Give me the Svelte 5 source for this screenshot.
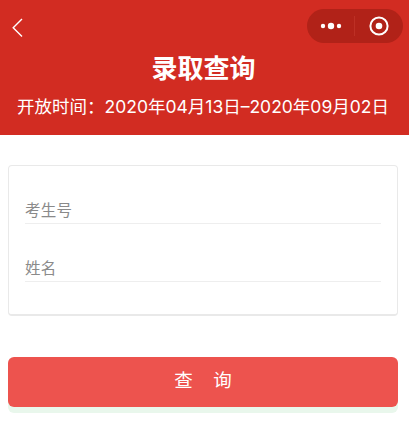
<script>
  const fields = ['考生号', '姓名'];
</script>

<div class="page">
  <header class="hero">
    <div class="topbar">
      <svg class="back" width="14" height="22" viewBox="0 0 14 22" aria-hidden="true">
        <path d="M11 2 L2.2 10.8 L11 19.6" fill="none" stroke="#fff" stroke-width="1.4" />
      </svg>
      <div class="capsule">
        <svg class="dots" width="22" height="8" viewBox="0 0 22 8" aria-hidden="true">
          <circle cx="3" cy="4" r="2.2" fill="#fff" />
          <circle cx="11" cy="4" r="3.2" fill="#fff" />
          <circle cx="19" cy="4" r="2.2" fill="#fff" />
        </svg>
        <span class="divider"></span>
        <svg width="20" height="20" viewBox="0 0 20 20" aria-hidden="true">
          <circle cx="10" cy="10" r="8.6" fill="none" stroke="#fff" stroke-width="2" />
          <circle cx="10" cy="10" r="3.3" fill="#fff" />
        </svg>
      </div>
    </div>
    <h1>录取查询</h1>
    <p>开放时间：2020年04月13日–2020年09月02日</p>
  </header>

  <section class="card">
    {#each fields as f}
      <div class="field">{f}</div>
    {/each}
  </section>

  <div class="action">
    <button type="button">查&nbsp;&nbsp;&nbsp;&nbsp;询</button>
  </div>
</div>

<style>
  :global(body) {
    margin: 0;
    background: #fff;
    overflow: hidden;
  }
  .page {
    width: 409px;
    height: 427px;
    font-family: "Liberation Sans", "Noto Sans CJK SC", sans-serif;
    overflow: hidden;
  }
  .hero {
    height: 135px;
    box-sizing: border-box;
    background: #d22c22;
    color: #fff;
    padding-top: 9px;
    text-align: center;
  }
  .topbar {
    height: 34px;
    display: flex;
    align-items: center;
    justify-content: space-between;
    padding: 0 6px 0 11px;
  }
  .back {
    display: block;
    margin-top: 4px;
  }
  .capsule {
    width: 96px;
    height: 34px;
    box-sizing: border-box;
    border-radius: 17px;
    background: #b12218;
    display: flex;
    align-items: center;
    padding: 0 14px 0 13px;
    justify-content: space-between;
  }
  .divider {
    width: 1px;
    height: 20px;
    background: #bd3025;
    margin-left: -2px;
  }
  h1 {
    margin: 8px 0 0;
    padding-right: 2px;
    font-size: 26px;
    line-height: 36px;
    font-weight: 700;
  }
  p {
    margin: 8px 0 0;
    padding-right: 3px;
    font-family: Inter, "Noto Sans CJK SC", sans-serif;
    font-size: 17.5px;
    font-weight: 400;
    line-height: 24px;
    white-space: nowrap;
  }
  .card {
    margin: 30px 11px 0 8px;
    height: 151px;
    box-sizing: border-box;
    border: 1px solid #e9e9e9;
    border-bottom-width: 2px;
    border-radius: 4px;
    padding: 33px 16px 0;
    display: flex;
    flex-direction: column;
    gap: 33px;
  }
  .field {
    height: 24px;
    line-height: 24px;
    font-size: 15.5px;
    color: #8a8a8a;
    border-bottom: 1px solid #eeeeee;
    letter-spacing: 0.2px;
  }
  .action {
    margin: 41px 11px 0 8px;
  }
  button {
    display: block;
    width: 100%;
    height: 50px;
    border: 0;
    border-radius: 6px;
    background: #ed534e;
    color: #fff;
    font: inherit;
    font-size: 18.5px;
    box-shadow: 0 6px 0 #e9f7ec;
    padding: 0 0 6px;
  }
</style>
